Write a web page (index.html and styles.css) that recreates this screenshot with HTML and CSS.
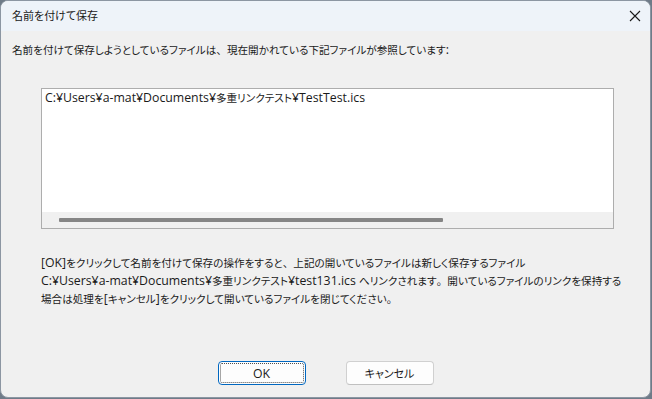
FILE: index.html
```html
<!DOCTYPE html>
<html lang="ja">
<head>
<meta charset="utf-8">
<link rel="stylesheet" href="styles.css">
</head>
<body>
<div class="window">
  <div class="titlebar">
    <span class="title">名前を付けて保存</span>
    <svg class="close" width="12" height="12" viewBox="0 0 12 12"><path d="M1 1 L11 11 M11 1 L1 11" stroke="#1a1a1a" stroke-width="1.1" fill="none"/></svg>
  </div>
  <div class="content">
    <p class="label">名前を付けて保存しようとしているファイルは<span class="pn">、</span>現在開かれている下記ファイルが参照しています<span class="lat">:</span></p>
    <div class="listbox">
      <div class="list-items">
        <div class="item"><span class="lat">C:¥Users¥a-mat¥Documents¥</span>多重リンクテスト<span class="lat">¥TestTest.ics</span></div>
      </div>
      <div class="hscroll"><div class="thumb"></div></div>
    </div>
    <p class="message"><span class="lat">[OK]</span>をクリックして名前を付けて保存の操作をすると<span class="pn">、</span>上記の開いているファイルは新しく保存するファイル<br><span class="lat">C:¥Users¥a-mat¥Documents¥</span>多重リンクテスト<span class="lat">¥test131.ics </span>へリンクされます<span class="pn">。</span>開いているファイルのリンクを保持する<br>場合は処理を<span class="lat">[</span>キャンセル<span class="lat">]</span>をクリックして開いているファイルを閉じてください<span class="pn">。</span></p>
    <div class="buttons">
      <button class="btn default"><span class="focus"><span class="lat">OK</span></span></button>
      <button class="btn">キャンセル</button>
    </div>
  </div>
</div>
</body>
</html>
```
FILE: styles.css
```css
html, body {
  margin: 0;
  padding: 0;
  background: #6f7b88;
}
body {
  width: 652px;
  height: 399px;
  overflow: hidden;
  font-family: "Open Sans", "Noto Sans CJK JP", sans-serif;
  font-size: 10.6px;
  font-feature-settings: "palt";
  color: #1a1a1a;
}
.pn {
  font-feature-settings: normal;
}
.lat {
  font-size: 12.3px;
}
.window {
  box-sizing: border-box;
  width: 651px;
  height: 398px;
  border: 1px solid #8c96a2;
  border-radius: 8px;
  background: #f0f0f0;
  overflow: hidden;
  display: flex;
  flex-direction: column;
}
.titlebar {
  height: 30px;
  flex: none;
  background: #eef3f9;
  display: flex;
  align-items: center;
  justify-content: space-between;
  padding: 0 9px 0 11px;
}
.title {
  font-size: 11px;
  line-height: 16px;
}
.content {
  flex: 1;
  display: flex;
  flex-direction: column;
  padding: 0 36px 0 11px;
}
.label {
  margin: 11px 0 0;
  height: 16px;
  line-height: 16px;
  white-space: nowrap;
}
.listbox {
  margin: 30px 0 0 29px;
  height: 139px;
  border: 1px solid #adadad;
  background: #ffffff;
  display: flex;
  flex-direction: column;
}
.list-items {
  flex: 1;
  padding: 1px 3px;
}
.item {
  height: 16px;
  line-height: 16px;
  white-space: nowrap;
}
.hscroll {
  height: 16px;
  background: #f0f0f0;
  display: flex;
  align-items: center;
  padding: 0 0 0 17px;
}
.thumb {
  width: 384px;
  height: 4px;
  background: #858585;
  border-radius: 1px;
}
.message {
  margin: 25px 0 0 29px;
  height: 51px;
  line-height: 17px;
  white-space: nowrap;
}
.buttons {
  margin-top: 56px;
  display: flex;
  justify-content: center;
  gap: 40px;
  padding-left: 25px;
}
.btn {
  box-sizing: border-box;
  width: 88px;
  height: 24px;
  border: 1px solid #d0d0d0;
  border-bottom-color: #c0c0c0;
  border-radius: 4px;
  background: #fdfdfd;
  font-family: "Open Sans", "Noto Sans CJK JP", sans-serif;
  font-size: 11px;
  font-feature-settings: "palt";
  color: #1a1a1a;
  padding: 0;
  display: flex;
  align-items: center;
  justify-content: center;
}
.btn.default {
  border: 1px solid #0067c0;
  padding: 1px;
}
.focus {
  box-sizing: border-box;
  width: 100%;
  height: 100%;
  border: 1px dotted #505050;
  border-radius: 2px;
  display: flex;
  align-items: center;
  justify-content: center;
}
```
